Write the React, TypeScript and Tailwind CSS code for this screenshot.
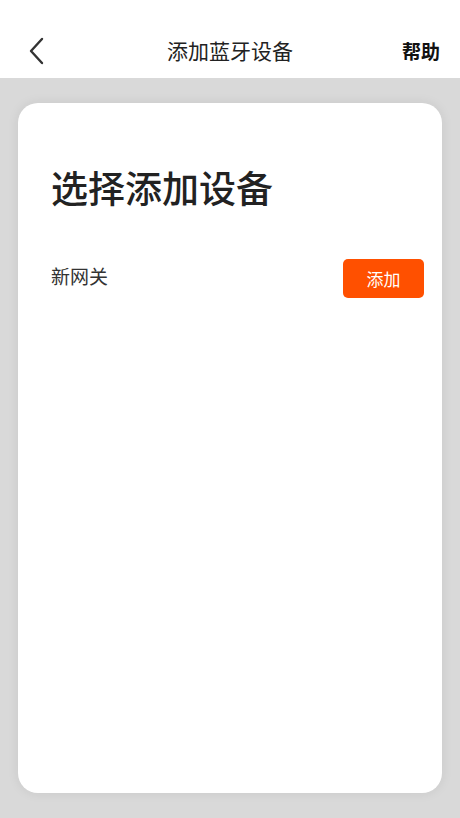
import React from "react";

export default function App() {
  const font = { fontFamily: '"Noto Sans CJK SC", "Noto Sans", sans-serif' };
  return (
    <div className="w-[460px] h-[818px] bg-[#d9d9d9] flex flex-col overflow-hidden" style={font}>
      <div className="h-[78px] bg-white pt-[24px] shrink-0">
        <div className="relative h-[54px] flex items-center justify-between px-[20px]">
          <svg width="24" height="30" viewBox="0 0 24 30" className="ml-[6px]">
            <path d="M16 3 L5 15 L16 27" fill="none" stroke="#333" strokeWidth="2.4" strokeLinecap="round" strokeLinejoin="round" />
          </svg>
          <div className="absolute inset-0 flex items-center justify-center text-[21px] text-[#222] pointer-events-none">
            添加蓝牙设备
          </div>
          <div className="text-[19px] font-bold text-[#111]">帮助</div>
        </div>
      </div>
      <div className="flex-1 px-[18px] pt-[25px] pb-[25px] flex">
        <div className="flex-1 bg-white rounded-[20px] shadow-[0_0_12px_rgba(0,0,0,0.08)] px-[33px] pt-[58px] flex flex-col">
          <div className="text-[37px] font-medium text-[#222] leading-[52px]">选择添加设备</div>
          <div className="mt-[46px] flex items-center justify-between -mr-[15px]">
            <div className="text-[19px] text-[#333] -mt-[4px]">新网关</div>
            <button className="w-[81px] h-[39px] rounded-[5px] bg-[#ff5000] text-white text-[17px] flex items-center justify-center">
              添加
            </button>
          </div>
        </div>
      </div>
    </div>
  );
}
